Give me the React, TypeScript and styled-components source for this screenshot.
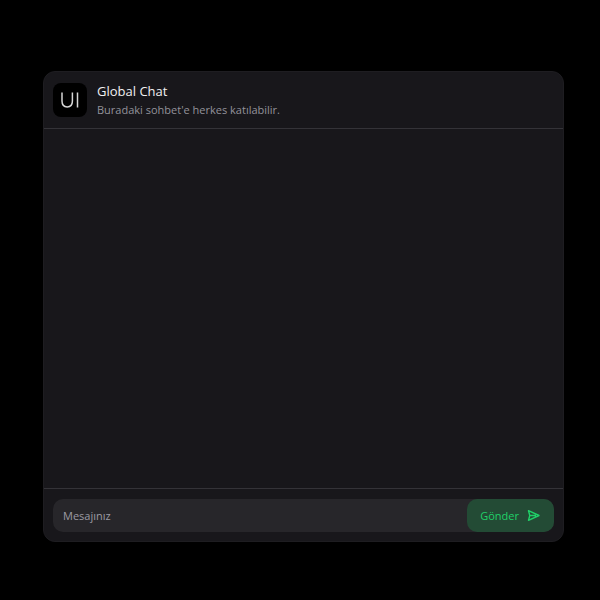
import React, { useState } from "react";
import styled, { createGlobalStyle } from "styled-components";

const GlobalStyle = createGlobalStyle`
  * { box-sizing: border-box; }
  body {
    margin: 0;
    background: #000;
    font-family: "Open Sans", "Noto Sans", sans-serif;
    font-size: 11px;
    line-height: 20px;
  }
  h1, p { margin: 0; }
  button, input { font: inherit; }
`;

const Page = styled.main`
  min-height: 100vh;
  padding: 71px 36px 58px 43px;
  display: flex;
`;

const Card = styled.section`
  flex: 1;
  min-width: 0;
  display: flex;
  flex-direction: column;
  background: #18171b;
  border: 1px solid #1e1d21;
  border-radius: 12px;
  overflow: hidden;
`;

const Header = styled.header`
  display: flex;
  align-items: flex-start;
  gap: 10px;
  padding: 11px 9px 8px;
  border-bottom: 1px solid #343338;
`;

const Logo = styled.div`
  flex: none;
  width: 34px;
  height: 34px;
  border-radius: 8px;
  background: #000;
  color: #d6d6d6;

  svg { display: block; }
`;

const Title = styled.h1`
  color: #f1f1f2;
  font-size: 13px;
  font-weight: 400;
  line-height: 17px;
`;

const Subtitle = styled.p`
  color: #93929a;
`;

const Messages = styled.div`
  flex: 1;
`;

const Footer = styled.footer`
  padding: 10px 9px 9px;
  border-top: 1px solid #343338;
`;

const Composer = styled.form`
  display: flex;
  height: 33px;
  border-radius: 10px;
  background: #27262a;
`;

const MessageInput = styled.input`
  flex: 1;
  min-width: 0;
  padding: 0 10px;
  border: 0;
  outline: 0;
  background: transparent;
  color: #f1f1f2;

  &::placeholder { color: #9c9ba3; opacity: 1; }
`;

const SendButton = styled.button`
  display: flex;
  align-items: center;
  gap: 8px;
  padding: 0 14px 0 13px;
  border: 0;
  border-radius: 10px;
  background: #234b35;
  color: #20d068;
  cursor: pointer;
`;

const LogoMark = () => (
  <svg width="34" height="34" viewBox="0 0 34 34" fill="none" stroke="currentColor" strokeWidth="1.5" aria-hidden="true">
    <path d="M9 9.6v8.4c0 3.9 1.9 5.9 5.2 5.9s5.2-2 5.2-5.9V9.6M24.5 9.6v14.8" />
  </svg>
);

const SendIcon = () => (
  <svg width="13" height="13" viewBox="0 0 13 13" fill="none" stroke="currentColor" strokeWidth="1.4" strokeLinejoin="round" aria-hidden="true">
    <path d="M1.5 1.7 12 6.5 1.5 11.3 2.8 6.5ZM2.8 6.5H9" />
  </svg>
);

export default function App() {
  const [message, setMessage] = useState("");

  return (
    <>
      <GlobalStyle />
      <Page>
        <Card>
          <Header>
            <Logo role="img" aria-label="UI"><LogoMark /></Logo>
            <div>
              <Title>Global Chat</Title>
              <Subtitle>Buradaki sohbet'e herkes katılabilir.</Subtitle>
            </div>
          </Header>
          <Messages role="log" />
          <Footer>
            <Composer onSubmit={(event) => event.preventDefault()}>
              <MessageInput
                aria-label="Mesajınız"
                placeholder="Mesajınız"
                value={message}
                onChange={(event) => setMessage(event.target.value)}
              />
              <SendButton type="submit">
                Gönder
                <SendIcon />
              </SendButton>
            </Composer>
          </Footer>
        </Card>
      </Page>
    </>
  );
}
